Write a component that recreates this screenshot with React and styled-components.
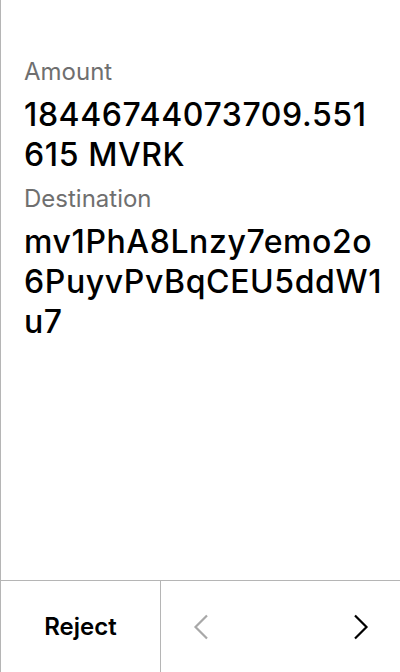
import React from "react";
import styled, { createGlobalStyle } from "styled-components";

const GlobalStyle = createGlobalStyle`
  html, body {
    margin: 0;
    padding: 0;
    background: #fff;
    font-family: Inter, "Noto Sans", sans-serif;
  }
  * {
    box-sizing: border-box;
  }
`;

const fields = [
  { label: "Amount", value: "18446744073709.551615 MVRK" },
  { label: "Destination", value: "mv1PhA8Lnzy7emo2o6PuyvPvBqCEU5ddW1u7" },
];

const Screen = () => (
  <>
    <GlobalStyle />
    <Device>
      <Content>
        {fields.map((f) => (
          <Field key={f.label}>
            <Label>{f.label}</Label>
            <Value>{f.value}</Value>
          </Field>
        ))}
      </Content>
      <Footer>
        <RejectButton>Reject</RejectButton>
        <Nav>
          <Chevron $disabled>
            <svg width="16" height="26" viewBox="0 0 16 26" fill="none">
              <path d="M14 1.5 L2.5 13 L14 24.5" stroke="currentColor" strokeWidth="2.2" />
            </svg>
          </Chevron>
          <Chevron>
            <svg width="16" height="26" viewBox="0 0 16 26" fill="none">
              <path d="M2 1.5 L13.5 13 L2 24.5" stroke="currentColor" strokeWidth="2.2" />
            </svg>
          </Chevron>
        </Nav>
      </Footer>
    </Device>
  </>
);

const Device = styled.div`
  width: 400px;
  height: 672px;
  display: flex;
  flex-direction: column;
  border-left: 1px solid #b5b5b5;
  background: #fff;
`;

const Content = styled.div`
  flex: 1;
  display: flex;
  flex-direction: column;
  gap: 8px;
  padding: 56px 16px 0 23px;
`;

const Field = styled.div`
  display: flex;
  flex-direction: column;
  gap: 7px;
`;

const Label = styled.div`
  font-size: 24px;
  line-height: 32px;
  color: #6f6f6f;
`;

const Value = styled.div`
  font-size: 32px;
  line-height: 40px;
  font-weight: 500;
  letter-spacing: 0.6px;
  color: #000;
  word-break: break-all;
`;

const Footer = styled.div`
  height: 92px;
  display: flex;
  border-top: 1px solid #b5b5b5;
`;

const RejectButton = styled.div`
  width: 160px;
  display: flex;
  align-items: center;
  justify-content: center;
  font-size: 24px;
  font-weight: 600;
  color: #000;
  border-right: 1px solid #b5b5b5;
`;

const Nav = styled.div`
  flex: 1;
  display: flex;
  align-items: center;
  justify-content: space-between;
  padding: 0 31px 0 32px;
`;

const Chevron = styled.div`
  display: flex;
  color: ${(p) => (p.$disabled ? "#a8a8a8" : "#000")};
`;

export default Screen;
